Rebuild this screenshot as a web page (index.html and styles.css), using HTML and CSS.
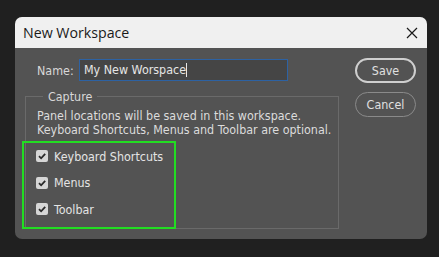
FILE: index.html
```html
<!DOCTYPE html>
<html>
<head>
<meta charset="utf-8">
<link rel="stylesheet" href="styles.css">
</head>
<body>
<div class="dialog">
  <div class="titlebar">
    <span class="title">New Workspace</span>
    <svg class="close" width="12" height="12" viewBox="0 0 12 12"><path d="M1 1L11 11M11 1L1 11" stroke="#1a1a1a" stroke-width="1.2" fill="none"/></svg>
  </div>
  <div class="content">
    <div class="main">
      <div class="name-row">
        <label class="name-label">Name:</label>
        <div class="name-input">My New Worspace<span class="caret"></span></div>
      </div>
      <fieldset class="capture">
        <legend>Capture</legend>
        <p class="note">Panel locations will be saved in this workspace.<br>Keyboard Shortcuts, Menus and Toolbar are optional.</p>
        <div class="checks">
          <div class="check"><span class="box"><svg width="12" height="12" viewBox="0 0 12 12"><path d="M3 6.2L5.1 8.3L9.2 3.8" stroke="#2a2a2a" stroke-width="1.8" fill="none"/></svg></span>Keyboard Shortcuts</div>
          <div class="check"><span class="box"><svg width="12" height="12" viewBox="0 0 12 12"><path d="M3 6.2L5.1 8.3L9.2 3.8" stroke="#2a2a2a" stroke-width="1.8" fill="none"/></svg></span>Menus</div>
          <div class="check"><span class="box"><svg width="12" height="12" viewBox="0 0 12 12"><path d="M3 6.2L5.1 8.3L9.2 3.8" stroke="#2a2a2a" stroke-width="1.8" fill="none"/></svg></span>Toolbar</div>
        </div>
        <div class="highlight"></div>
      </fieldset>
    </div>
    <div class="buttons">
      <button class="btn primary">Save</button>
      <button class="btn">Cancel</button>
    </div>
  </div>
</div>
</body>
</html>
```

FILE: styles.css
```css
html, body {
  margin: 0;
  padding: 0;
}
body {
  background: #202020;
  width: 439px;
  height: 257px;
  padding: 17px 0 0 15px;
  box-sizing: border-box;
  font-family: "DejaVu Sans Condensed", "DejaVu Sans", sans-serif;
}
.dialog {
  width: 412px;
  height: 222px;
  border-radius: 7px;
  overflow: hidden;
  background: #535353;
  display: flex;
  flex-direction: column;
}
.titlebar {
  height: 31px;
  background: #f0f0f0;
  display: flex;
  align-items: center;
  justify-content: space-between;
  padding: 0 9px 0 8px;
  flex: none;
}
.title {
  font-family: "Open Sans", "Noto Sans", sans-serif;
  font-size: 14.2px;
  color: #1a1a1a;
}
.close {
  display: block;
}
.content {
  display: flex;
  flex: 1;
}
.main {
  width: 314px;
  padding: 11px 0 0 10px;
}
.name-row {
  display: flex;
  align-items: center;
  padding-left: 12px;
  height: 22px;
}
.name-label {
  color: #d8d8d8;
  font-size: 12.4px;
  width: 42px;
}
.name-input {
  width: 209px;
  height: 22px;
  box-sizing: border-box;
  border: 1.5px solid #2d62a3;
  background: #454545;
  color: #e6e6e6;
  font-size: 12.4px;
  line-height: 18px;
  padding-left: 4px;
  display: flex;
  align-items: center;
}
.caret {
  display: inline-block;
  width: 1px;
  height: 14px;
  background: #e6e6e6;
}
.capture {
  position: relative;
  margin: 8px 0 0 0;
  width: 314px;
  height: 140px;
  box-sizing: border-box;
  border: 1px solid #6a6a6a;
  padding: 0 0 0 11px;
}
.capture legend {
  color: #d8d8d8;
  font-size: 12.4px;
  padding: 0 5px;
  margin-left: 6px;
}
.note {
  margin: 5px 0 0 0;
  color: #dcdcdc;
  font-size: 12.4px;
  line-height: 13.5px;
}
.checks {
  margin-top: 7px;
  margin-left: -1px;
  display: flex;
  flex-direction: column;
}
.check {
  display: flex;
  align-items: center;
  height: 26.5px;
  color: #e4e4e4;
  font-size: 12.4px;
}
.box {
  width: 12px;
  height: 12px;
  border-radius: 2px;
  background: #d6d6d6;
  margin-right: 6px;
  display: flex;
}
.highlight {
  position: absolute;
  left: -4px;
  top: 37px;
  width: 150px;
  height: 84px;
  border: 2px solid #22dd22;
}
.buttons {
  margin-left: 16px;
  padding-top: 10px;
  display: flex;
  flex-direction: column;
  gap: 9px;
}
.btn {
  width: 61px;
  height: 25px;
  border-radius: 13px;
  border: 1px solid #8a8a8a;
  background: transparent;
  color: #e0e0e0;
  font-family: "DejaVu Sans Condensed", "DejaVu Sans", sans-serif;
  font-size: 12.4px;
  padding: 0;
}
.btn.primary {
  border: 2px solid #cfcfcf;
}
```
